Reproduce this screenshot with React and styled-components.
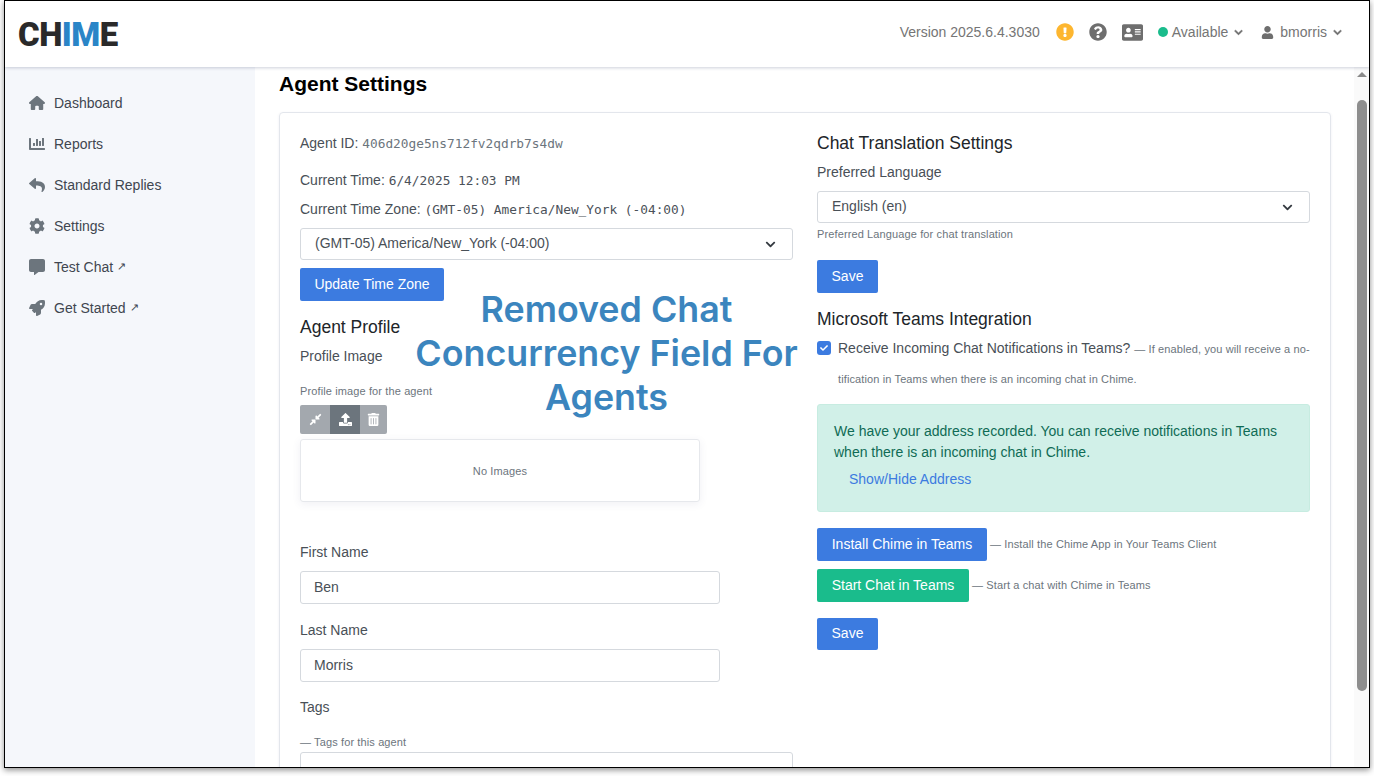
import React from 'react';
import styled, { createGlobalStyle } from 'styled-components';
import {
  FaChartBar, FaReply, FaCog, FaCommentAlt, FaRocket, FaExclamationCircle, FaQuestionCircle,
  FaAddressCard, FaUser, FaChevronDown, FaCompressAlt, FaUpload, FaTrashAlt, FaCheck,
} from 'react-icons/fa';
import { FaHouse } from 'react-icons/fa6';

const Global = createGlobalStyle`
  html, body { margin: 0; padding: 0; height: 776px; overflow: hidden; background: #fff; }
  * { box-sizing: border-box; }
  body { font-family: "Liberation Sans", Arial, sans-serif; font-size: 14px; color: #495057; }
`;

const Frame = styled.div`
  width: 1366px; height: 768px; margin-left: 4px;
  border: 1px solid #000;
  box-shadow: 0 2px 6px rgba(0,0,0,.45);
  display: flex; flex-direction: column; overflow: hidden; background: #fff;
`;
const Header = styled.header`
  height: 66px; flex: none; display: flex; align-items: center; justify-content: space-between;
  padding: 0 27px 0 13px; background: #fff;
  box-shadow: 0 1px 3px rgba(60,70,110,.25);
  position: relative; z-index: 2;
`;
const Logo = styled.div`
  font-family: Roboto, "Liberation Sans", sans-serif; font-weight: 900; font-size: 33px;
  letter-spacing: -.5px; color: #2a2a2a; line-height: 1;
  span { color: #2a85c7; }
`;
const HeaderRight = styled.div`display: flex; align-items: center; color: #757575; margin-top: -4px;`;
const Version = styled.span`margin-right: 16px;`;
const HIcon = styled.span`
  display: inline-flex; margin-right: ${p => p.$mr}px; color: ${p => p.$c || '#6e6e6e'}; font-size: ${p => p.$s}px;
`;
const Dot = styled.span`width: 10px; height: 10px; border-radius: 50%; background: #1abc8c; margin-right: 4px;`;
const Chevron = styled(FaChevronDown)`
  font-size: 9px; margin-left: 6px; color: #6e6e6e; stroke: currentColor; stroke-width: 30;
`;
const Spacer = styled.span`width: ${p => p.$w}px;`;

const Body = styled.div`flex: 1; min-height: 0; display: flex;`;
const Sidebar = styled.nav`
  width: 250px; flex: none; background: #f5f7fb; padding-top: 15px;
`;
const NavItem = styled.a`
  height: 41px; display: flex; align-items: center; padding-left: 23px; color: #3f4650; font-size: 14px;
`;
const NavIcon = styled.span`
  width: 18px; margin-right: 8px; display: flex; justify-content: center; color: #6c757d; font-size: 16px;
`;
const Ext = styled.span`font-size: 11px; margin-left: 4px;`;

const Main = styled.main`flex: 1; min-width: 0; overflow: hidden; padding: 5px 23px 0 24px; background: #fff;`;
const Title = styled.h1`margin: 0; font-size: 21px; line-height: 24px; font-weight: 700; color: #000;`;
const Card = styled.section`
  margin-top: 16px; border: 1px solid #e3e6ec; border-radius: 4px; padding: 20px 20px 0;
  display: grid; grid-template-columns: 493px 493px; column-gap: 24px; height: 800px;
  box-shadow: 0 1px 3px rgba(60,70,110,.08);
  position: relative;
`;
const Col = styled.div`min-width: 0;`;
const Line = styled.div`
  margin-top: ${p => p.$mt || 0}px; line-height: 20px; height: 20px; white-space: nowrap; color: #495057;
`;
const Mono = styled.span`font-family: "DejaVu Sans Mono", monospace; font-size: 12.8px; color: ${p => p.$c || '#4b5159'};`;
const Heading = styled.h3`
  margin: ${p => p.$mt || 0}px 0 0; font-weight: 400; font-size: 17.5px; line-height: 20px; color: #212529;
`;
const Small = styled.div`
  margin-top: ${p => p.$mt || 0}px; font-size: 11px; line-height: 14px; color: #6c757d; letter-spacing: .12px;
`;
const SelectBox = styled.div`
  margin-top: ${p => p.$mt || 0}px; height: 32px; border: 1px solid #d5d9de; border-radius: 3px;
  display: flex; align-items: center; justify-content: space-between; padding: 0 16px 2px 14px; color: #495057;
  svg { font-size: 11px; color: #343a40; margin-top: 2px; }
`;
const Input = styled.div`
  margin-top: ${p => p.$mt || 0}px; height: ${p => p.$h || 33}px; width: ${p => p.$w || 420}px;
  border: 1px solid #d5d9de; border-radius: 3px; padding-left: 13px; line-height: 31px; color: #495057;
`;
const Btn = styled.button`
  margin-top: ${p => p.$mt || 0}px; height: ${p => p.$h || 33}px; width: ${p => p.$w}px; flex: none; padding: 0 0 2px;
  background: ${p => p.$green ? '#1abc8c' : '#3c7be0'}; color: #fff; border: 0; border-radius: 2px;
  font: 14px "Liberation Sans", Arial, sans-serif; display: block;
`;
const ToolGroup = styled.div`
  margin-top: 7px; display: flex; width: 87px; height: 29px; border-radius: 2px; overflow: hidden;
`;
const Tool = styled.span`
  width: ${p => p.$w}px; display: flex; align-items: center; justify-content: center; color: #fff; font-size: 13px;
  background: ${p => p.$dark ? '#6c757d' : '#a3a8ae'};
`;
const ImageBox = styled.div`
  margin-top: 5px; width: 400px; height: 63px; border: 1px solid #e6e8ec; border-radius: 3px;
  box-shadow: 0 2px 8px rgba(60,70,110,.08);
  display: flex; align-items: center; justify-content: center; font-size: 11px; color: #6c757d; letter-spacing: .12px;
`;
const CheckRow = styled.div`margin-top: 4px; display: flex;`;
const CheckMark = styled.span`
  width: 14px; height: 14px; flex: none; margin: 8px 7px 0 0; border-radius: 3px; background: #3c7be0; color: #fff;
  display: flex; align-items: center; justify-content: center; font-size: 8px;
`;
const CheckText = styled.div`color: #495057;`;
const CheckLine = styled.div`height: 30px; line-height: 30px; white-space: nowrap;`;
const Hint = styled.span`font-size: 11px; color: #6c757d; letter-spacing: .12px;`;
const Alert = styled.div`
  margin-top: 11px; height: 108px; padding: 16px 16px 0; border: 1px solid #c7ece1; border-radius: 3px;
  background: #d1f0e8; color: #0f6b55; line-height: 21px;
`;
const AlertLink = styled.div`margin: 6px 0 0 15px; line-height: 20px; color: #3c7be0;`;
const BtnRow = styled.div`
  margin-top: ${p => p.$mt}px; display: flex; align-items: center; gap: 3px;
  ${Hint} { margin-top: -2px; }
`;
const Overlay = styled.div`
  position: absolute; left: 134px; top: 174px; width: 385px;
  font-family: Inter, sans-serif; font-weight: 600; font-size: 35.8px; line-height: 44px; color: #3b85be;
`;
const OverlayLine = styled.div`width: fit-content; margin: 0 auto; white-space: nowrap;`;
const Scrollbar = styled.div`width: 15px; flex: none; background: #fafafa; display: flex; flex-direction: column; align-items: center;`;
const ArrowUp = styled.span`
  margin-top: 5px; width: 0; height: 0; border-left: 5px solid transparent; border-right: 5px solid transparent;
  border-bottom: 5px solid #8a8a8a;
`;
const Thumb = styled.div`margin-top: 23px; width: 10px; height: 591px; border-radius: 5px; background: #8e8e8e; align-self: flex-end; margin-right: 2px;`;

const nav = [
  [FaHouse, 'Dashboard'], [FaChartBar, 'Reports'], [FaReply, 'Standard Replies'],
  [FaCog, 'Settings'], [FaCommentAlt, 'Test Chat', true], [FaRocket, 'Get Started', true],
];

export default function App() {
  return (
    <>
      <Global />
      <Frame>
        <Header>
          <Logo>CH<span>IM</span>E</Logo>
          <HeaderRight>
            <Version>Version 2025.6.4.3030</Version>
            <HIcon $c="#fdb62f" $s={18} $mr={15}><FaExclamationCircle /></HIcon>
            <HIcon $s={18} $mr={15}><FaQuestionCircle /></HIcon>
            <HIcon $s={21} $mr={15}><FaAddressCard /></HIcon>
            <Dot />
            <span>Available</span>
            <Chevron />
            <Spacer $w={18} />
            <HIcon $s={13} $mr={6}><FaUser /></HIcon>
            <span>bmorris</span>
            <Chevron />
          </HeaderRight>
        </Header>
        <Body>
          <Sidebar>
            {nav.map(([Icon, label, ext]) => (
              <NavItem key={label}>
                <NavIcon><Icon /></NavIcon>
                {label}{ext && <Ext>↗</Ext>}
              </NavItem>
            ))}
          </Sidebar>
          <Main>
            <Title>Agent Settings</Title>
            <Card>
              <Col>
                <Line>Agent ID: <Mono $c="#6c757d">406d20ge5ns712fv2qdrb7s4dw</Mono></Line>
                <Line $mt={17}>Current Time: <Mono>6/4/2025 12:03 PM</Mono></Line>
                <Line $mt={9}>Current Time Zone: <Mono>(GMT-05) America/New_York (-04:00)</Mono></Line>
                <SelectBox $mt={9}>(GMT-05) America/New_York (-04:00)<FaChevronDown /></SelectBox>
                <Btn $mt={8} $w={144}>Update Time Zone</Btn>
                <Heading $mt={16}>Agent Profile</Heading>
                <Line $mt={9}>Profile Image</Line>
                <Small $mt={18}>Profile image for the agent</Small>
                <ToolGroup>
                  <Tool $w={30}><FaCompressAlt /></Tool>
                  <Tool $w={30} $dark><FaUpload /></Tool>
                  <Tool $w={27}><FaTrashAlt /></Tool>
                </ToolGroup>
                <ImageBox>No Images</ImageBox>
                <Line $mt={40}>First Name</Line>
                <Input $mt={9}>Ben</Input>
                <Line $mt={16}>Last Name</Line>
                <Input $mt={9}>Morris</Input>
                <Line $mt={15}>Tags</Line>
                <Small $mt={18}>— Tags for this agent</Small>
                <Input $mt={3} $w={493} $h={60} />
              </Col>
              <Col>
                <Heading>Chat Translation Settings</Heading>
                <Line $mt={9}>Preferred Language</Line>
                <SelectBox $mt={9}>English (en)<FaChevronDown /></SelectBox>
                <Small $mt={4}>Preferred Language for chat translation</Small>
                <Btn $mt={19} $w={61}>Save</Btn>
                <Heading $mt={16}>Microsoft Teams Integration</Heading>
                <CheckRow>
                  <CheckMark><FaCheck /></CheckMark>
                  <CheckText>
                    <CheckLine>Receive Incoming Chat Notifications in Teams? <Hint>— If enabled, you will receive a no-</Hint></CheckLine>
                    <CheckLine><Hint>tification in Teams when there is an incoming chat in Chime.</Hint></CheckLine>
                  </CheckText>
                </CheckRow>
                <Alert>
                  We have your address recorded. You can receive notifications in Teams<br />
                  when there is an incoming chat in Chime.
                  <AlertLink>Show/Hide Address</AlertLink>
                </Alert>
                <BtnRow $mt={16}>
                  <Btn $w={170}>Install Chime in Teams</Btn>
                  <Hint>— Install the Chime App in Your Teams Client</Hint>
                </BtnRow>
                <BtnRow $mt={8}>
                  <Btn $w={152} $green>Start Chat in Teams</Btn>
                  <Hint>— Start a chat with Chime in Teams</Hint>
                </BtnRow>
                <Btn $mt={16} $w={61} $h={32}>Save</Btn>
              </Col>
              <Overlay>
                <OverlayLine>Removed Chat</OverlayLine>
                <OverlayLine>Concurrency Field For</OverlayLine>
                <OverlayLine>Agents</OverlayLine>
              </Overlay>
            </Card>
          </Main>
          <Scrollbar>
            <ArrowUp />
            <Thumb />
          </Scrollbar>
        </Body>
      </Frame>
    </>
  );
}
